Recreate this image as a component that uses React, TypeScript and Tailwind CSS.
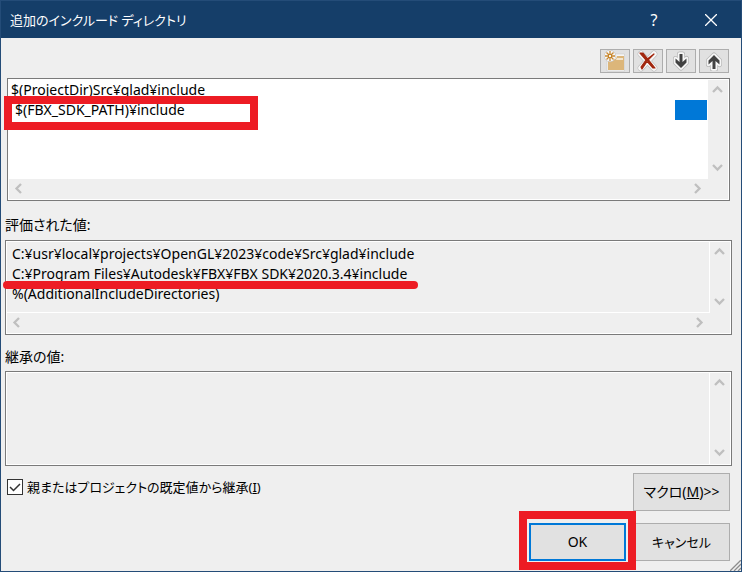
import React from "react";

type Dir = "up" | "down" | "left" | "right";
const chevrons: Record<Dir, string> = {
  up: "M1 8 L5.5 3.5 L10 8",
  down: "M1 2 L5.5 6.5 L10 2",
  left: "M8 1 L3.5 5.5 L8 10",
  right: "M3 1 L7.5 5.5 L3 10",
};

function ScrollButton({ dir }: { dir: Dir }) {
  return (
    <button type="button" aria-label={`Scroll ${dir}`} className="flex size-5 items-center justify-center pr-[2px] pb-px">
      <svg width="11" height="11" viewBox="0 0 11 11" fill="none" stroke="#bfbfbf" strokeWidth="2.3">
        <path d={chevrons[dir]} />
      </svg>
    </button>
  );
}

function ListPane({ label, field, horizontal, className, children }: {
  label: string; field?: boolean; horizontal?: boolean; className: string; children?: React.ReactNode;
}) {
  return (
    <section aria-label={label} className={`flex flex-col border border-[#7a7a7a] bg-[#efefef] p-px ring-1 ring-inset ring-white ${className}`}>
      <div className="flex min-h-0 flex-1">
        <div className={`min-w-0 flex-1 ${field ? "bg-white" : "border-r border-white"} ${horizontal && !field ? "border-b" : ""}`}>{children}</div>
        <div className="flex w-5 flex-col justify-between">
          <ScrollButton dir="up" />
          <ScrollButton dir="down" />
        </div>
      </div>
      {horizontal && (
        <div className="mr-5 flex h-5 justify-between">
          <ScrollButton dir="left" />
          <ScrollButton dir="right" />
        </div>
      )}
    </section>
  );
}

function ToolButton({ label, children }: { label: string; children: React.ReactNode }) {
  return (
    <button type="button" aria-label={label} className="flex h-6 w-[30px] items-center justify-center border border-[#adadad] bg-[#e1e1e1]">
      {children}
    </button>
  );
}

const arrowDown = "M7.500 3h3v8l4-3.500v4L9 17l-5.500-5.500v-4l4 3.500z";
const arrowUp = "M7.500 18h3v-8l4 3.500v-4L9 4 3.500 9.500v4l4-3.500z";

function Arrow({ d }: { d: string }) {
  return (
    <svg width="18" height="20" viewBox="0 0 18 20">
      <path d={d} fill="#f6f6f6" stroke="#b8b8b8" strokeWidth="5" strokeLinejoin="round" />
      <path d={d} fill="#f6f6f6" stroke="#f6f6f6" strokeWidth="3.500" strokeLinejoin="round" />
      <path d={d} fill="#424242" />
    </svg>
  );
}

export default function App() {
  return (
    <main className="flex min-h-screen flex-col border border-[#244c78] bg-[#efefef] font-['Noto_Sans','Noto_Sans_CJK_JP',sans-serif] text-sm leading-5 text-black [font-feature-settings:'palt']">
      <header className="flex h-[37px] items-center bg-[#153e69] pl-[9px] text-white">
        <h1 className="flex-1 text-[13px]">追加のインクルード ディレクトリ</h1>
        <button type="button" aria-label="Help" className="h-full w-[54px] text-base">?</button>
        <button type="button" aria-label="Close" className="flex h-full w-[60px] items-center justify-center">
          <svg width="12" height="12" viewBox="0 0 12 12" stroke="white" strokeWidth="1.3"><path d="M0 0L12 12M12 0L0 12" /></svg>
        </button>
      </header>

      <div className="flex flex-1 flex-col pr-[9px] pl-1">
        <div role="toolbar" className="mt-[11px] flex justify-end gap-[3px] pr-[3px]">
          <ToolButton label="新しい行">
            <svg width="22" height="22" viewBox="0 0 22 22">
              <path d="M3 7h8V4h9.500v17H3z" fill="#f6f6f6" stroke="#c4c4c4" strokeWidth="0.500" />
              <path d="M4 9h8l1-3h7v14H4z" fill="#dcb67a" />
              <path d="M13 8h6v2h-7z" fill="#f3e6cf" />
              <circle cx="6" cy="6" r="5.800" fill="#f6f6f6" stroke="#b8b8b8" strokeWidth="0.500" />
              <path d="M6 1v10M1 6h10M2.500 2.500l7 7M9.500 2.500l-7 7" stroke="#c98a35" strokeWidth="1.300" />
              <circle cx="6" cy="6" r="2.200" fill="#c27d1a" />
              <circle cx="6" cy="6" r="1.200" fill="#f6f6f6" />
            </svg>
          </ToolButton>
          <ToolButton label="削除">
            <svg width="22" height="22" viewBox="0 0 22 22" fill="none" strokeLinecap="round">
              <path d="M4 4L17 18M17 4L4 18" stroke="#b8b8b8" strokeWidth="6.500" />
              <path d="M4 4L17 18M17 4L4 18" stroke="#f6f6f6" strokeWidth="5.500" />
              <path d="M3 3L6 3L18 18L16 18ZM17 4L11 10L5 19L4 17L9 10Z" fill="#a1260d" stroke="#a1260d" strokeWidth="1.200" strokeLinejoin="round" />
            </svg>
          </ToolButton>
          <ToolButton label="下へ"><Arrow d={arrowDown} /></ToolButton>
          <ToolButton label="上へ"><Arrow d={arrowUp} /></ToolButton>
        </div>

        <ListPane label="追加のインクルード ディレクトリ" field horizontal className="mt-[5px] mr-[2px] ml-[2px] h-[123px]">
          <ul className="relative">
            <li className="pl-[2px]">$(ProjectDir)Src¥glad¥include</li>
            <li className="flex h-5 items-center justify-between pr-px pl-[6px]">
              <span>$(FBX_SDK_PATH)¥include</span>
              <span className="h-5 w-8 bg-[#0078d7]" />
            </li>
            <li aria-hidden="true" className="absolute top-4 -left-[5px] h-[34px] w-[254px] border-8 border-[#ed1c24]" />
          </ul>
        </ListPane>

        <h2 className="mt-[14px] mb-[5px]">評価された値:</h2>
        <ListPane label="評価された値" horizontal className="h-[95px]">
          <ul className="relative pt-[2px] pl-[5px]">
            <li>C:¥usr¥local¥projects¥OpenGL¥2023¥code¥Src¥glad¥include</li>
            <li>C:¥Program Files¥Autodesk¥FBX¥FBX SDK¥2020.3.4¥include</li>
            <li>%(AdditionalIncludeDirectories)</li>
            <li aria-hidden="true" className="absolute top-[39px] -left-1 h-2 w-[415px] rounded-full bg-[#ed1c24]" />
          </ul>
        </ListPane>

        <h2 className="mt-3 mb-1">継承の値:</h2>
        <ListPane label="継承の値" className="h-[95px]" />

        <div className="mt-[7px] flex items-start justify-between pr-[2px] pl-[2px]">
          <label className="mt-1 flex items-center gap-1">
            <span className="relative flex size-4">
              <input type="checkbox" defaultChecked className="size-4 appearance-none border border-[#333] bg-white" />
              <svg className="pointer-events-none absolute inset-0" width="16" height="16" viewBox="0 0 16 16" fill="none" stroke="#333" strokeWidth="1.500"><path d="M3 8l3.500 3.500L13 5" /></svg>
            </span>
            <span className="text-[13px]">親またはプロジェクトの既定値から継承(<u>I</u>)</span>
          </label>
          <button type="button" className="h-[38px] w-[97px] border border-[#adadad] bg-[#e1e1e1]">マクロ(<u>M</u>)&gt;&gt;</button>
        </div>

        <div className="mt-3 flex justify-end gap-[7px] pr-[2px]">
          <div className="relative">
            <button type="button" className="h-[38px] w-[97px] border-2 border-[#0078d7] bg-[#e1e1e1]">OK</button>
            <span aria-hidden="true" className="pointer-events-none absolute -top-3 -left-[10px] h-[59px] w-[117px] border-8 border-[#ed1c24]" />
          </div>
          <button type="button" className="h-[38px] w-[97px] border border-[#adadad] bg-[#e1e1e1] text-[13px]">キャンセル</button>
        </div>
        <svg aria-hidden="true" className="-mt-px -mr-[9px] self-end" width="11" height="11" viewBox="0 0 11 11" stroke="#8c8c8c" strokeWidth="1.300"><path d="M0 11L11 0M4 11l7-7M8 11l3-3" /></svg>
      </div>
    </main>
  );
}
